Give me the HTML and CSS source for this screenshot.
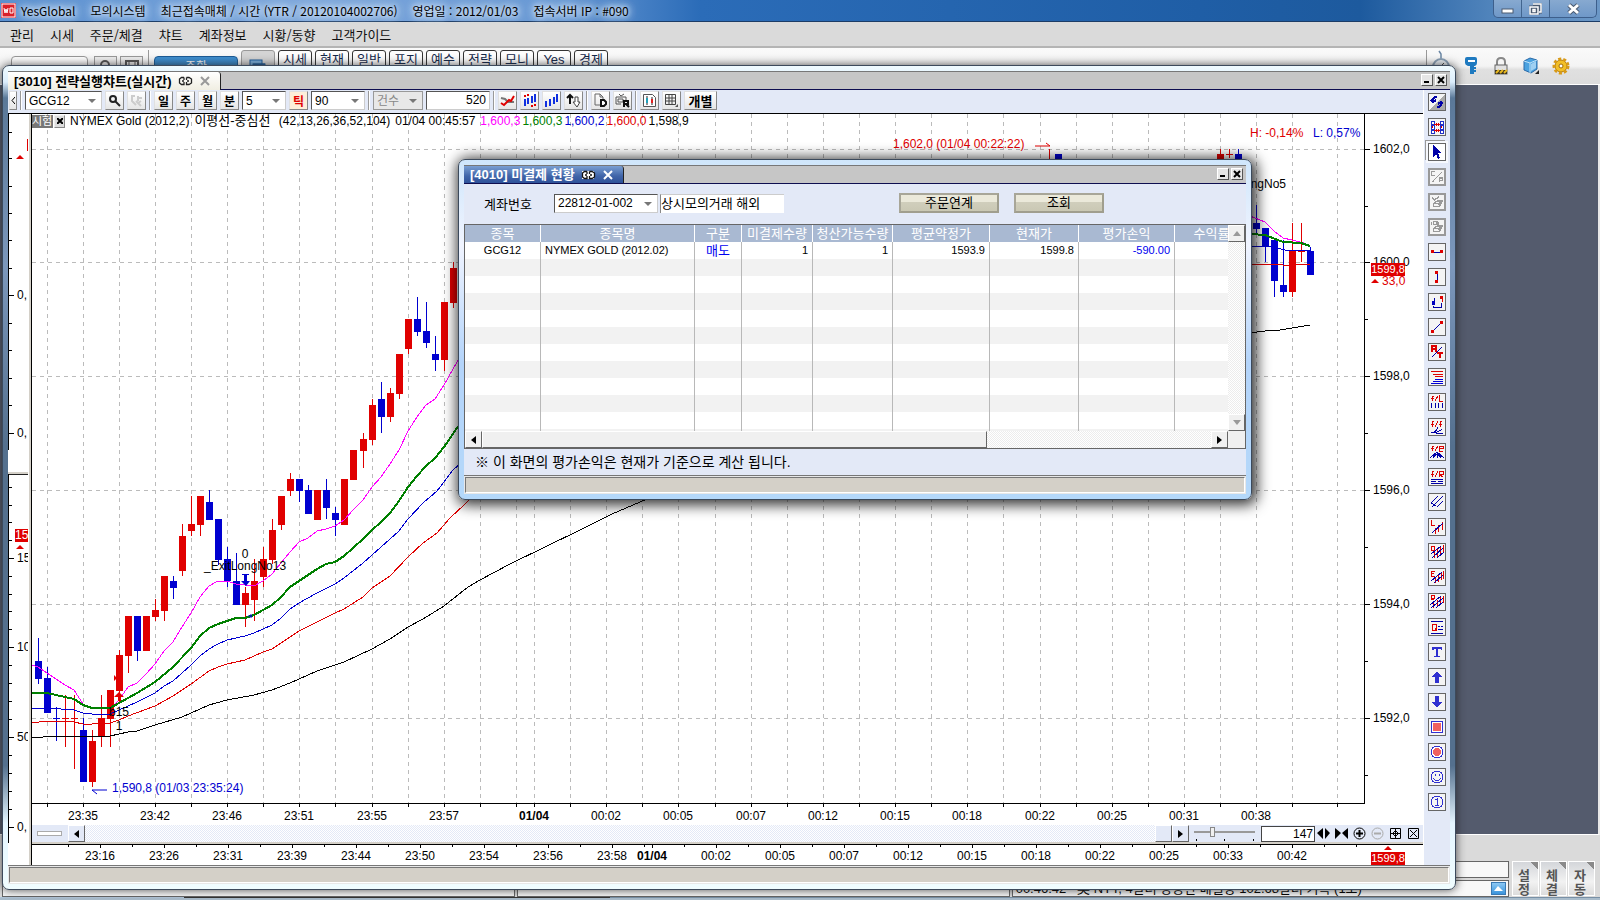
FILE: index.html
```
<!DOCTYPE html>
<html lang="ko">
<head>
    <meta charset="UTF-8">
    <meta name="viewport" content="width=device-width, initial-scale=1.0">
    <title>YesGlobal 모의시스템</title>
    <link rel="stylesheet" href="styles.css">
</head>
<body>
    <div class="app">
        <header class="titlebar">
            <svg class="logo" width="15" height="15" viewBox="0 0 15 15"><rect width="15" height="15" fill="#d9202a"/><rect x="1" y="1" width="13" height="13" fill="none" stroke="#fff"/><path d="M3 5l1 5 1-4 1 4 1-5M9 5h3v5H9z" fill="none" stroke="#fff"/></svg>
            <div class="title-text">
                <span>YesGlobal</span>
                <span>모의시스템</span>
                <span>최근접속매체 / 시간 (YTR / 20120104002706)</span>
                <span>영업일 : 2012/01/03</span>
                <span>접속서버 IP : #090</span>
            </div>
            <div class="sys-buttons">
                <button aria-label="최소화"><svg width="13" height="12"><rect x="1" y="6" width="11" height="4" fill="#fff" stroke="#4a5a70"/></svg></button>
                <button aria-label="이전 크기로"><svg width="13" height="12"><path d="M4 1h8v8h-2M1 4h8v7H1zM4 6.500h2v2H4z" fill="none" stroke="#4a5a70" stroke-width="3"/><path d="M4 1h8v8h-2M1 4h8v7H1zM4 6.500h2v2H4z" fill="none" stroke="#fff" stroke-width="1.500"/></svg></button>
                <button aria-label="닫기"><svg width="13" height="12"><path d="M2 2l9 8M11 2l-9 8" stroke="#4a5a70" stroke-width="5"/><path d="M2 2l9 8M11 2l-9 8" stroke="#fff" stroke-width="3"/></svg></button>
            </div>
        </header>

        <nav class="menubar">
            <a href="#">관리</a>
            <a href="#">시세</a>
            <a href="#">주문/체결</a>
            <a href="#">챠트</a>
            <a href="#">계좌정보</a>
            <a href="#">시황/동향</a>
            <a href="#">고객가이드</a>
        </nav>

        <div class="quickbar">
            <input class="quick-input" type="text" aria-label="화면번호">
            <button class="quick-btn" aria-label="검색"><svg width="14" height="14" viewBox="0 0 14 14"><circle cx="6" cy="5" r="4" fill="none" stroke="#555" stroke-width="2"/><path d="M9 8l4 5" stroke="#555" stroke-width="2"/></svg></button>
            <button class="quick-btn" aria-label="저장"><svg width="14" height="14" viewBox="0 0 14 14"><path d="M1 1h12v12H1z" fill="none" stroke="#555" stroke-width="2"/><path d="M4 1v5h6V1" fill="none" stroke="#555"/></svg></button>
            <span class="quick-sep"></span>
            <button class="quick-main">주황</button>
            <div class="quick-tabs">
                <button class="stack" aria-label="화면 목록"><svg width="18" height="16" viewBox="0 0 18 16"><rect x="1" y="1" width="12" height="9" fill="#7ab0de" stroke="#1f5c9a"/><rect x="4" y="5" width="12" height="9" fill="#cfe4f6" stroke="#1f5c9a"/><path d="M4 6h12" stroke="#1f5c9a" stroke-width="3"/></svg></button>
                <button>시세</button>
                <button>현재</button>
                <button>일반</button>
                <button>포지</button>
                <button>예수</button>
                <button>전략</button>
                <button>모니</button>
                <button>Yes</button>
                <button>경제</button>
            </div>
            <div class="quick-icons">
                <svg width="18" height="26" viewBox="0 0 18 26"><path d="M7 1l2 3v5" fill="none" stroke="#6a86a4" stroke-width="1.500"/><circle cx="9" cy="17" r="8" fill="#e8eef4" stroke="#8aa0b6" stroke-width="2"/><path d="M8 17l4-4" stroke="#444"/></svg>
                <svg width="18" height="20" viewBox="0 0 18 20"><path d="M3 3q0-2 2-2h8q2 0 2 2v4q0 2-2 3h-1v8H8v-8H6q-3-1-3-3z" fill="#1f7ac0"/><path d="M6 4h7v2H6z" fill="#fff"/><path d="M12 12h2M12 15h2" stroke="#1f7ac0" stroke-width="2"/></svg>
                <svg width="18" height="20" viewBox="0 0 18 20"><path d="M5 10V6q0-4 4-4t4 4v4" fill="none" stroke="#888" stroke-width="2"/><rect x="3" y="9" width="12" height="9" fill="#e2e2e2" stroke="#666"/><path d="M3 14h12v4H3z" fill="#3a3420"/><path d="M4 17l3-3M8 17l3-3M12 17l3-3" stroke="#e8b820" stroke-width="2"/></svg>
                <svg width="18" height="20" viewBox="0 0 18 20"><path d="M2 5l6-3 7 2v9l-6 4-7-3z" fill="#4aa2e0" stroke="#2a6aa8"/><path d="M2 5l6 2 7-3M8 7v10" fill="none" stroke="#bfe2f8"/><path d="M9 8l5-3v7l-5 3z" fill="#9fd0f2"/><path d="M17 14v4h-4z" fill="#222"/></svg>
                <svg width="18" height="20" viewBox="0 0 18 20"><circle cx="9" cy="10" r="6" fill="#f2bf26" stroke="#b07a10"/><circle cx="9" cy="10" r="7" fill="none" stroke="#d89a18" stroke-width="3" stroke-dasharray="3 2"/><circle cx="9" cy="10" r="2" fill="#fff" stroke="#a06a08"/></svg>
            </div>
        </div>

        <main class="desktop"></main>

        <footer class="bottombar">
            <div class="feeds">
                <div class="feed-row"><div></div><div></div><div></div></div>
                <div class="feed-row"><div></div><div></div><div class="news">00:46:42&nbsp;&nbsp; 美 NYT, 4달러 상승한 배럴당 102.68달러 기록 (1보)<button class="news-up" aria-label="펼치기"><svg width="9" height="5"><path d="M0 5l4-5 5 5z" fill="#fff"/></svg></button></div></div>
            </div>
            <div class="side-buttons">
                <button>설<br>정</button>
                <button>체<br>결</button>
                <button>자<br>동</button>
            </div>
        </footer>
        <div class="taskbar"></div>

        <!-- 3010 chart window -->
        <section class="window chart-window">
            <div class="tabbar">
                <div class="tab">
                    <b>[3010] 전략실행챠트(실시간)</b>
                    <svg width="15" height="10" viewBox="0 0 15 10"><path d="M6 1.500H3.500L1.500 3v4l2 1.500H6V6M6 1.500V4M4 5h2M8.500 1.500H11L13.500 3v4L11 8.500H8.500V6M8.500 1.500V4M9 5h2" fill="none" stroke="#222" stroke-width="1.300"/></svg>
                    <button class="tab-close" aria-label="탭 닫기"><svg width="10" height="10"><path d="M1 1l8 8M9 1l-8 8" stroke="#999" stroke-width="2"/></svg></button>
                </div>
                <div class="win-buttons">
                    <button aria-label="최소화"><svg width="8" height="8"><path d="M1 6h5" stroke="#000" stroke-width="2"/></svg></button>
                    <button aria-label="닫기"><svg width="8" height="8"><path d="M1 1l6 6M7 1l-6 6" stroke="#000" stroke-width="2"/></svg></button>
                </div>
            </div>

            <div class="work">
                <div class="work-left">
                    <div class="toolbar">
                        <button class="tb slim" aria-label="접기"><svg width="4" height="7"><path d="M4 0L1 3.500 4 7" fill="none" stroke="#000"/></svg></button>
                        <span class="sep"></span>
                        <span class="select w77"><select aria-label="종목"><option>GCG12</option></select></span>
                        <button class="tb" aria-label="종목 검색"><svg width="13" height="13"><circle cx="5" cy="5" r="3" fill="none" stroke="#222" stroke-width="2"/><path d="M7 7l5 5" stroke="#222" stroke-width="2"/></svg></button>
                        <button class="tb" aria-label="검색 취소" disabled><svg width="13" height="13"><path d="M5 2H2v5l4 4M6 7l5 5M8 2v5M8 4h4M11 7l-3 2" fill="none" stroke="#ccc" stroke-width="2"/></svg></button>
                        <span class="sep"></span>
                        <button class="tb">일</button>
                        <button class="tb">주</button>
                        <button class="tb">월</button>
                        <button class="tb">분</button>
                        <span class="select w44"><select aria-label="분 단위"><option>5</option></select></span>
                        <button class="tb red">틱</button>
                        <span class="select w54"><select aria-label="틱 단위"><option>90</option></select></span>
                        <span class="sep"></span>
                        <span class="select w50"><select aria-label="조회 기준" disabled><option>건수</option></select></span>
                        <input class="count" type="text" value="520" aria-label="조회 건수">
                        <span class="sep"></span>
                        <button class="tb" aria-label="라인"><svg width="15" height="15"><path d="M1 5l4 1 3 3h6" fill="none" stroke="#777" stroke-width="2"/><path d="M1 10l3 2 5-5 2 1 3-5" fill="none" stroke="#e00000" stroke-width="2"/></svg></button>
                        <button class="tb" aria-label="봉 비교"><svg width="15" height="15"><path d="M3 6v7M6 5v6M10 3v7M13 1v8" stroke="#1030e0" stroke-width="2"/><path d="M2 3h2M5 2h2M9 13h2M12 12h2" stroke="#e00000" stroke-width="2"/></svg></button>
                        <button class="tb" aria-label="봉"><svg width="15" height="15"><path d="M2 8v6M6 6v7M10 4v7M13 1v8" stroke="#1030e0" stroke-width="2"/></svg></button>
                        <button class="tb" aria-label="상하 반전"><svg width="15" height="15"><path d="M4 2v9M1 5l3-3 3 3" fill="none" stroke="#111" stroke-width="2"/><path d="M9 4h3v5h2l-3 5-4-5h2z" fill="#fff" stroke="#444"/></svg></button>
                        <span class="sep"></span>
                        <button class="tb" aria-label="데이터"><svg width="15" height="15"><path d="M7 12H2V1h5l3 3v2M7 1v3h3" fill="none" stroke="#666"/><path d="M8 7h3l2 2v2l-2 2H8z" fill="#fff" stroke="#111" stroke-width="2"/></svg></button>
                        <button class="tb" aria-label="리플레이"><svg width="15" height="15"><path d="M4 1l2 2 3-2M1 4h10v3M1 4v7h5M3 6h5v3H3z" fill="none" stroke="#555"/><path d="M9 14V8h4v3H9M11 11l3 3" fill="none" stroke="#111" stroke-width="2"/></svg></button>
                        <span class="sep"></span>
                        <button class="tb" aria-label="차트 유형"><svg width="15" height="15"><path d="M1.500 1.500h9l3 3v9h-12z" fill="#fff" stroke="#555"/><path d="M5 3v9M10 4v8" stroke="#222"/><path d="M4 5h2v5H4z" fill="#20a0b8"/><path d="M9 6h2v4H9z" fill="#e02020"/></svg></button>
                        <button class="tb" aria-label="표"><svg width="15" height="15"><path d="M1.500 1.500h10v10h-10zM1 5h10M1 8h10M5 2v10M8 2v10" fill="none" stroke="#444"/><path d="M14 11v3h-3z" fill="#555"/></svg></button>
                        <button class="tb wide">개별</button>
                    </div>

                    <div class="panes">
                        <div class="side-pane">
                            <svg class="side-svg" id="sideAxis"></svg>
                        </div>
                        <div class="chart-pane">
                            <div class="chart-body">
                                <svg class="chart-svg" id="chart"></svg>
                                <div class="chart-info">
                                    <span class="mock">시험</span><button class="mock-x" aria-label="지표 삭제"><svg width="6" height="6"><path d="M0 0l6 6M6 0l-6 6" stroke="#000" stroke-width="2"/></svg></button>
                                    <span>NYMEX Gold (2012,2)</span>
                                    <span class="indicator">이평선-중심선</span>
                                    <span>&nbsp;(42,13,26,36,52,104)</span>
                                    <span>01/04 00:45:57</span>
                                    <div class="values">
                                        <span class="magenta">1,600,3</span>
                                        <span class="green">1,600,3</span>
                                        <span class="blue">1,600,2</span>
                                        <span class="crimson">1,600,0</span>
                                        <span>1,598,9</span>
                                    </div>
                                </div>
                            </div>
                            <div class="scrollstrip">
                                <span class="grip"></span>
                                <button class="sb" aria-label="왼쪽"><svg width="5" height="8"><path d="M5 0v8L0 4z"/></svg></button>
                                <span class="track"></span>
                                <span class="sb"></span>
                                <button class="sb" aria-label="오른쪽"><svg width="5" height="8"><path d="M0 0v8l5-4z"/></svg></button>
                                <input class="zoom-range" type="range" min="0" max="100" value="28" aria-label="확대">
                                <input class="bars" type="text" value="147" aria-label="봉 개수">
                                <div class="strip-icons">
                                    <svg width="13" height="13"><path d="M6 1v11L0 6zM8 1v11l5-6z"/></svg>
                                    <svg width="13" height="13"><path d="M0 1v11l6-6zM13 1v11L7 6z"/></svg>
                                    <svg width="13" height="13"><circle cx="6.500" cy="6.500" r="5.500" fill="none" stroke="#000"/><path d="M3 6.500h7M6.500 3v7" stroke="#000" stroke-width="2"/></svg>
                                    <svg width="13" height="13"><circle cx="6.500" cy="6.500" r="5.500" fill="none" stroke="#aaa"/><path d="M3 6.500h7" stroke="#aaa" stroke-width="2"/></svg>
                                    <svg width="13" height="13"><path d="M1.500 1.500h10v10h-10zM2 6.500h9M6.500 2v9M4.500 5v3M8.500 5v3M5 4.500h3M5 8.500h3" fill="none" stroke="#000"/></svg>
                                    <svg width="13" height="13"><path d="M1.500 1.500h10v10h-10zM3 3l7 7M10 3l-7 7" fill="none" stroke="#000"/></svg>
                                </div>
                            </div>
                            <svg class="lower-svg" id="lowerAxis"></svg>
                        </div>
                    </div>
                </div>

                <div class="tools">
                    <button aria-label="새로고침"><svg viewBox="0 0 16 16"><path d="M16 0v16H0z" fill="#aaa"/><path d="M8 3H6L4 5v3M2 6l2 2 3-2M8 13h2l2-2V8M9 10l3-2 2 2" fill="none" stroke="#0000a8" stroke-width="2"/></svg></button>
                    <button aria-label="연결"><svg viewBox="0 0 16 16"><path d="M2 2h3v3H2zM2 6h3v4H2zM2 11h3v3H2zM11 2h3v3h-3zM11 6h3v4h-3zM11 11h3v3h-3z" fill="#fff" stroke="#2030c8"/><path d="M5 5h6M5 11h6M7 4v3M9 4v3M7 10v3M9 10v3M3 7v2M12 7v2" stroke="#d00"/></svg></button>
                    <button class="on" aria-label="선택"><svg viewBox="0 0 16 16"><path d="M4 1v12l3-3 2 5 2-1-2-5h4z" fill="#0000a8"/></svg></button>
                    <button aria-label="콜풋" disabled><svg viewBox="0 0 16 16"><path d="M6 2H2v4h4M11 14V9h3v3h-3M3 13L13 3M12 3h2M2 13h2" fill="none" stroke="#999" stroke-width="1.500"/></svg></button>
                    <button aria-label="지우개" disabled><svg viewBox="0 0 16 16"><path d="M2 3l3 3 5-4M4 10l4-3h6l-3 6H4zM4 10h6l4-3M10 10l1 3" fill="none" stroke="#999" stroke-width="1.500"/></svg></button>
                    <button aria-label="전체 지우개" disabled><svg viewBox="0 0 16 16"><path d="M2 2v4M4 2h4v3H4zM10 2v5M4 10l4-3h6l-3 6H4zM4 10h6l4-3M10 10l1 3" fill="none" stroke="#999" stroke-width="1.500"/></svg></button>
                    <button aria-label="수평선"><svg viewBox="0 0 16 16"><path d="M2 8h12" stroke="#0000a8"/><path d="M2 6h3v3H2zM11 6h3v3h-3z" fill="#d00"/></svg></button>
                    <button aria-label="수직선"><svg viewBox="0 0 16 16"><path d="M8 3v10" stroke="#0000a8"/><path d="M6 2h3v3H6zM6 11h3v3H6z" fill="#d00"/></svg></button>
                    <button aria-label="구간"><svg viewBox="0 0 16 16"><path d="M3 7h3v4H3z" fill="#0000c0"/><path d="M5 4v3M4 13h8V9M4 13v-1" fill="none" stroke="#0000a8"/><path d="M11 2h3v3h-3z" fill="#d00"/><path d="M13 5v3" stroke="#d00"/></svg></button>
                    <button aria-label="추세선"><svg viewBox="0 0 16 16"><path d="M3 13L13 3" stroke="#0000a8"/><path d="M2 11h3v3H2zM11 2h3v3h-3z" fill="#d00"/></svg></button>
                    <button aria-label="각도"><svg viewBox="0 0 16 16"><path d="M3 8V2h4v6M3 5h4M8 9h6M11 9v5" fill="none" stroke="#d00" stroke-width="2"/><path d="M3 13L13 3" stroke="#0000a8"/></svg></button>
                    <button aria-label="피보나치"><svg viewBox="0 0 16 16"><path d="M2 2h12M4 5h10M6 7h8" stroke="#d00"/><path d="M6 10h8M4 12h10M2 14h12" stroke="#0000d8"/></svg></button>
                    <button aria-label="피보나치 시간"><svg viewBox="0 0 16 16"><path d="M5 2H3v5M2 4h3M10 1v6h4M6 7l3-5" fill="none" stroke="#d00"/><path d="M2 9v5M6 9v5M9 9v5M13 9v5" stroke="#0000a8"/></svg></button>
                    <button aria-label="피보나치 팬"><svg viewBox="0 0 16 16"><path d="M5 2H3v6M2 5h3M13 2h-2v6M10 5h3M6 8l3-6" fill="none" stroke="#d00"/><path d="M2 14q5 0 7-6M4 14q6-1 9-4M7 14h7" fill="none" stroke="#0000a8"/></svg></button>
                    <button aria-label="피보나치 원"><svg viewBox="0 0 16 16"><path d="M5 2H3v5M2 4h3M6 7l3-5M10 4h4V2h-4v5h4" fill="none" stroke="#d00"/><path d="M1 14l7-6 7 6M4 14q4-7 8 0M8 8v6" fill="none" stroke="#0000a8"/></svg></button>
                    <button aria-label="되돌림"><svg viewBox="0 0 16 16"><path d="M5 2H3v6M2 5h3M6 8l3-6M10 8V2h4v3h-4l4 3" fill="none" stroke="#d00"/><path d="M2 10h12M2 12h5M9 12h5M2 14h12" stroke="#0000a8"/></svg></button>
                    <button aria-label="평행선"><svg viewBox="0 0 16 16"><path d="M2 9l7-7M3 13L14 2M8 13l6-6M2 9l5 3" fill="none" stroke="#0000a8"/></svg></button>
                    <button aria-label="회귀 L"><svg viewBox="0 0 16 16"><path d="M2 1v5h4M6 9v6M9 6v7M13 3v8" fill="none" stroke="#d00"/><path d="M3 14L14 4" stroke="#0000a8"/></svg></button>
                    <button aria-label="회귀 D"><svg viewBox="0 0 16 16"><path d="M2 2h3v4H2zM5 8v6M8 5v8M11 3v8M14 1v8" fill="none" stroke="#d00"/><path d="M2 10l10-8M3 14L14 4M8 14l7-6" stroke="#0000a8"/></svg></button>
                    <button aria-label="회귀 E"><svg viewBox="0 0 16 16"><path d="M6 2H2v5h4M2 4h3M6 9v5M9 6v7M12 3v8M14 2v8" fill="none" stroke="#d00"/><path d="M2 12l11-9M5 14l9-8" stroke="#0000a8"/></svg></button>
                    <button aria-label="회귀 R"><svg viewBox="0 0 16 16"><path d="M2 6V1h3v3H2l3 2M4 8v6M8 6v7M11 3v8M14 2v7" fill="none" stroke="#d00"/><path d="M1 11L12 2M2 14L14 4M7 14l7-6" stroke="#0000a8"/></svg></button>
                    <button aria-label="사분선"><svg viewBox="0 0 16 16"><path d="M2 2h12M9 7h2M12 7h2M9 10h5M2 14h12" stroke="#0000a8"/><path d="M3 5h4v6H3zM6 9l2 3" fill="none" stroke="#d00"/></svg></button>
                    <button aria-label="문자"><svg viewBox="0 0 16 16"><path d="M3 3h10v3h-1l-1-1H9v7h2v1H5v-1h2V5H5L4 6H3z" fill="#3030d0"/></svg></button>
                    <button aria-label="위 화살표"><svg viewBox="0 0 16 16"><path d="M8 2l5 6h-3v6H6V8H3z" fill="#3030d0"/></svg></button>
                    <button aria-label="아래 화살표"><svg viewBox="0 0 16 16"><path d="M8 14l5-6h-3V2H6v6H3z" fill="#3030d0"/></svg></button>
                    <button aria-label="사각형"><svg viewBox="0 0 16 16"><path d="M2.500 2.500h11v11h-11z" fill="#fff" stroke="#3030d0"/><path d="M4 4h8v8H4z" fill="#f06060"/></svg></button>
                    <button aria-label="원"><svg viewBox="0 0 16 16"><circle cx="8" cy="8" r="6" fill="#fff" stroke="#3030d0"/><circle cx="8" cy="8" r="4" fill="#f06060"/></svg></button>
                    <button aria-label="스마일"><svg viewBox="0 0 16 16"><circle cx="8" cy="8" r="6" fill="none" stroke="#3030d0"/><path d="M6 5v2M10 5v2M4 9q4 5 8 0" fill="none" stroke="#3030d0"/></svg></button>
                    <button aria-label="번호"><svg viewBox="0 0 16 16"><circle cx="8" cy="8" r="6" fill="none" stroke="#3030d0"/><path d="M6 6l2-1v6M6 11h4" fill="none" stroke="#3030d0"/></svg></button>
                </div>
            </div>
            <div class="statusbar"><span></span></div>
        </section>

        <!-- 4010 open positions -->
        <section class="window position-window">
            <div class="tabbar">
                <div class="tab active">
                    <b>[4010] 미결제 현황</b>
                    <svg width="15" height="10" viewBox="0 0 15 10"><path d="M1 1h12v8H1z" fill="#fff"/><path d="M6 1.500H3.500L1.500 3v4l2 1.500H6V6M6 1.500V4M4 5h2M8.500 1.500H11L13.500 3v4L11 8.500H8.500V6M8.500 1.500V4M9 5h2" fill="none" stroke="#111" stroke-width="1.300"/></svg>
                    <button class="tab-close" aria-label="탭 닫기"><svg width="10" height="10"><path d="M1 1l8 8M9 1l-8 8" stroke="#fff" stroke-width="2"/></svg></button>
                </div>
                <div class="win-buttons">
                    <button aria-label="최소화"><svg width="8" height="8"><path d="M1 6h5" stroke="#000" stroke-width="2"/></svg></button>
                    <button aria-label="닫기"><svg width="8" height="8"><path d="M1 1l6 6M7 1l-6 6" stroke="#000" stroke-width="2"/></svg></button>
                </div>
            </div>
            <div class="account-form">
                <label for="account">계좌번호</label>
                <span class="select account"><select id="account"><option>22812-01-002</option></select></span>
                <input class="owner" type="text" value="상시모의거래 해외" aria-label="계좌명">
                <button class="cmd wide">주문연계</button>
                <button class="cmd">조회</button>
            </div>
            <div class="grid">
                <div class="grid-main">
                    <div class="grid-view">
                        <table>
                            <colgroup><col class="c76"><col class="c154"><col class="c47"><col class="c71"><col class="c80"><col class="c97"><col class="c89"><col class="c96"><col class="c74"></colgroup>
                            <thead>
                                <tr><th>종목</th><th>종목명</th><th>구분</th><th>미결제수량</th><th>청산가능수량</th><th>평균약정가</th><th>현재가</th><th>평가손익</th><th>수익률</th></tr>
                            </thead>
                            <tbody id="rows">
                                <tr><td class="mid">GCG12</td><td>NYMEX GOLD (2012.02)</td><td class="mid sell">매도</td><td class="num">1</td><td class="num">1</td><td class="num">1593.9</td><td class="num">1599.8</td><td class="num sell">-590.00</td><td></td></tr>
                            </tbody>
                        </table>
                    </div>
                    <div class="vscroll">
                        <button class="sb" aria-label="위"><svg width="8" height="5"><path d="M0 5h8L4 0z" fill="#999"/></svg></button>
                        <span class="track"></span>
                        <button class="sb" aria-label="아래"><svg width="8" height="5"><path d="M0 0h8L4 5z" fill="#999"/></svg></button>
                    </div>
                </div>
                <div class="hscroll">
                    <button class="sb" aria-label="왼쪽"><svg width="5" height="8"><path d="M5 0v8L0 4z"/></svg></button>
                    <span class="sb thumb"></span>
                    <span class="track"></span>
                    <button class="sb" aria-label="오른쪽"><svg width="5" height="8"><path d="M0 0v8l5-4z"/></svg></button>
                    <span class="corner"></span>
                </div>
            </div>
            <p class="note">※ 이 화면의 평가손익은 현재가 기준으로 계산 됩니다.</p>
            <div class="statusbar"><span></span></div>
        </section>
    </div>
    <script src="chart.js"></script>
</body>
</html>
```
FILE: styles.css
```
* {
    margin: 0;
    padding: 0;
    box-sizing: border-box;
}

body {
    font-family: "Liberation Sans", "Noto Sans CJK KR", sans-serif;
    font-size: 12px;
    color: #000;
    overflow: hidden;
}

button, input, select {
    font-family: inherit;
    font-size: 12px;
    color: inherit;
    border: none;
    border-radius: 0;
    background: none;
    outline: none;
}

svg {
    display: block;
    flex: none;
}

.app {
    position: relative;
    display: flex;
    flex-direction: column;
    height: 100vh;
    background: #dadada;
}

/* title bar */
.titlebar {
    display: flex;
    align-items: center;
    height: 22px;
    padding-left: 1px;
    background: linear-gradient(90deg, #5a90d0 0, #7ba6dc 300px, #6798d4 560px, #2b6cb8 700px, #1f5ea6 1200px, #1d5a9e 85%, #4f83bb 93%, #6b97c6);
    border-bottom: 1px solid #1c3c66;
}

.title-text {
    display: flex;
    gap: 15px;
    margin-left: 5px;
    font-family: "Noto Sans CJK KR", sans-serif;
    font-size: 12px;
    line-height: 20px;
    white-space: nowrap;
    text-shadow: 0 0 4px #dce9f8, 0 0 8px #dce9f8, 0 0 10px #dce9f8, 0 0 14px #c4daf4;
}

.sys-buttons {
    display: flex;
    align-self: flex-start;
    height: 18px;
    margin: 0 3px 0 auto;
    border: 1px solid #3d5f8c;
    border-top: none;
    border-radius: 0 0 5px 5px;
    background: linear-gradient(#87a9d0, #6f98c8);
}

.sys-buttons button {
    display: flex;
    align-items: center;
    justify-content: center;
    width: 28px;
    border-right: 1px solid #42658f;
}

.sys-buttons button:last-child {
    width: 46px;
    border: none;
}

/* menu */
.menubar {
    display: flex;
    gap: 16px;
    height: 26px;
    padding-left: 10px;
    font-family: "Noto Sans CJK KR", sans-serif;
    font-size: 13px;
    line-height: 25px;
    border-bottom: 2px solid #b4b4b4;
}

.menubar a {
    color: #111;
    text-decoration: none;
}

/* quick bar */
.quickbar {
    display: flex;
    align-items: flex-start;
    height: 37px;
    padding: 8px 30px 0 11px;
    background: linear-gradient(#fafafa, #f4f4f4 50%, #e0e0e0 60%, #dcdcdc);
    border-bottom: 1px solid #fff;
}

.quick-input {
    width: 77px;
    height: 24px;
    margin-right: 6px;
    background: #fff;
    border: 1px solid #999;
    border-radius: 4px;
}

.quick-btn {
    display: flex;
    align-items: center;
    justify-content: center;
    width: 23px;
    height: 22px;
    margin-right: 3px;
    background: #eee;
    border: 1px solid #999;
}

.quick-sep {
    width: 1px;
    height: 28px;
    margin: -6px 5px 0 2px;
    background: #999;
}

.quick-main {
    width: 84px;
    height: 26px;
    padding-bottom: 8px;
    color: #fff;
    background: linear-gradient(#3f8fd0, #2a76b8);
    border: 1px solid #1d5c96;
    border-radius: 4px;
}

.quick-tabs {
    display: flex;
    gap: 3px;
    margin: -6px 0 0 3px;
}

.quick-tabs button {
    width: 34px;
    height: 34px;
    padding-bottom: 15px;
    font-size: 13px;
    color: #14284a;
    background: #fdfdfd;
    border: 1px solid #333;
    border-radius: 3px 3px 0 0;
    line-height: 16px;
}

.quick-tabs .stack {
    display: flex;
    justify-content: center;
    padding-top: 8px;
    background: #d4d4d4;
    border-color: #999;
}

.quick-icons {
    display: flex;
    gap: 12px;
    margin: -6px 0 0 auto;
    padding-left: 5px;
    border-left: 1px solid #999;
}

.quick-icons svg + svg {
    margin-top: 6px;
}

.desktop {
    flex: 1;
    background: #545b6d;
    border-right: 2px solid #e8e8e8;
    border-bottom: 1px solid #fff;
}

/* bottom */
.bottombar {
    display: flex;
    height: 62px;
    padding: 26px 5px 0 2px;
}

.feeds {
    flex: 1;
    margin-right: 3px;
}

.feed-row {
    display: flex;
    gap: 2px;
    height: 17px;
    margin-bottom: 2px;
}

.feed-row div {
    flex: 1 1 0;
    min-width: 0;
    background: #f8f8f8;
    border: 1px solid #666;
}

.feed-row div:first-child {
    flex-basis: 23px;
}

.feed-row .news {
    display: flex;
    justify-content: space-between;
    padding: 0 2px 0 3px;
    font-size: 13px;
    line-height: 15px;
    white-space: nowrap;
}

.news-up {
    display: flex;
    align-items: center;
    justify-content: center;
    width: 15px;
    height: 13px;
    margin-top: 1px;
    background: linear-gradient(#8cc8f4, #3a94dc);
    border: 1px solid #3a7ab4;
}

.side-buttons {
    display: flex;
    gap: 1px;
}

.side-buttons button {
    width: 27px;
    height: 35px;
    font-size: 13px;
    font-weight: bold;
    line-height: 14px;
    color: #555;
    padding: 7px 3px 0 0;
    background: linear-gradient(225deg, #8a8a8a 0, #8a8a8a 5px, transparent 5px), linear-gradient(#d4d6da, #f2f2f2 60%, #dcdcdc);
    border: 1px solid #fff;
}

.taskbar {
    height: 3px;
    background: linear-gradient(90deg, #b0c4d8 0, #b0c4d8 184px, #333 184px, #333 610px, #7890a6 610px);
    border-bottom: 2px solid #a9bccb;
}

/* windows */
.window {
    position: absolute;
    display: flex;
    flex-direction: column;
    padding: 5px;
    border: 1px solid #3c4a5c;
    border-radius: 7px;
}

.chart-window {
    left: 2px;
    top: 65px;
    right: 144px;
    bottom: 10px;
    background: linear-gradient(#f0fbff 0, #dceefc 16px, #5a7898 32px, #7c98bc 200px, #54708e 380px, #54708e 85%, #e4f6ff 92%, #f0fdff);
    box-shadow: 0 0 10px #222c;
}

.position-window {
    left: 458px;
    top: 159px;
    width: 794px;
    background: linear-gradient(#cfe6fb, #f0f4ff 25%, #b4d4fa 60%, #b4d8fa);
    box-shadow: 2px 2px 14px 3px #000c;
}

.tabbar {
    display: flex;
    justify-content: space-between;
    height: 19px;
    flex: none;
    background: #c6c6c6;
    border-top: 1px solid #777;
    border-bottom: 1px solid #0e0e50;
}

.tab {
    display: flex;
    align-items: center;
    height: 18px;
    padding: 0 10px 0 6px;
    background: linear-gradient(#fff, #f0eee2);
    border-right: 1px solid #222;
    border-radius: 0 3px 0 0;
}

.tab b {
    font-size: 13px;
    line-height: 17px;
    margin-right: 6px;
    white-space: nowrap;
}

.tab.active {
    height: 17px;
    color: #fff;
    background: linear-gradient(#7a9fd2, #3f64a8 60%, #2e529a);
}

.tab-close {
    margin-left: 7px;
}

.win-buttons {
    display: flex;
    gap: 2px;
    padding: 2px 3px 0 0;
}

.win-buttons button {
    display: flex;
    align-items: center;
    justify-content: center;
    width: 12px;
    height: 12px;
    background: #e6e6e6;
    border: 1px solid;
    border-color: #fff #555 #555 #fff;
}

.statusbar {
    height: 19px;
    flex: none;
    padding: 1px;
    background: #e8e8e8;
    border-top: 1px solid #777;
}

.statusbar span {
    display: block;
    height: 16px;
    background: #d4d0c8;
    border: 1px solid;
    border-color: #777 #fff #fff #777;
}

.work {
    flex: 1;
    display: flex;
    min-height: 0;
    background: #e3e9f7;
}

.work-left {
    flex: 1;
    min-width: 0;
    display: flex;
    flex-direction: column;
}

/* chart toolbar */
.toolbar {
    display: flex;
    gap: 3px;
    height: 24px;
    padding: 1px 0 0 1px;
    border-bottom: 1px solid #000;
}

.tb {
    display: flex;
    align-items: center;
    justify-content: center;
    width: 19px;
    height: 19px;
    font-weight: bold;
    background: linear-gradient(#fff, #e6e6e6);
    border: 1px solid;
    border-color: #e0e0e0 #888 #888 #e0e0e0;
    flex: none;
}

.tb.slim {
    width: 8px;
}

.tb.wide {
    width: 33px;
    font-size: 13px;
}

.tb.red {
    color: #e00000;
    background: #fdeeda;
}

.sep {
    width: 2px;
    height: 19px;
    background: #999;
    border-right: 1px solid #fff;
}

.select {
    position: relative;
    display: block;
    height: 19px;
    flex: none;
}

.select::after {
    content: "";
    position: absolute;
    right: 6px;
    top: 8px;
    border: 4px solid transparent;
    border-top-color: #777;
    border-bottom: none;
    pointer-events: none;
}

.select select {
    appearance: none;
    width: 100%;
    height: 19px;
    padding-left: 3px;
    background: #fff;
    border: 1px solid;
    border-color: #555 #ccc #ccc #555;
}

.select select:disabled {
    color: #888;
    background: #e8e8e8;
    border-color: #999;
    opacity: 1;
}

.w77 {
    width: 77px;
}

.w44 {
    width: 44px;
}

.w54 {
    width: 54px;
}

.w50 {
    width: 50px;
}

.count {
    width: 64px;
    height: 19px;
    padding: 0 3px 2px 0;
    text-align: right;
    background: #fff;
    border: 1px solid;
    border-color: #555 #ccc #ccc #555;
}

.panes {
    flex: 1;
    display: flex;
    min-height: 0;
    background: #fff;
}

.side-pane {
    width: 23px;
    border-right: 2px solid #d4d0c8;
}

.side-svg {
    width: 20px;
    height: 100%;
}

.chart-pane {
    flex: 1;
    min-width: 0;
    display: flex;
    flex-direction: column;
    border-left: 1px solid #000;
}

.chart-body {
    flex: 1;
    min-height: 0;
    position: relative;
}

.chart-svg {
    width: 100%;
    height: 100%;
}

.chart-svg text, .lower-svg text, .side-svg text {
    font-size: 12px;
}

.chart-svg .price, .lower-svg .price {
    font-size: 11px;
}

.chart-info {
    position: absolute;
    left: 0;
    top: 0;
    display: flex;
    align-items: center;
    gap: 5px;
    line-height: 14px;
    white-space: nowrap;
}

.indicator {
    font-size: 13px;
}

.values {
    display: flex;
    gap: 2px;
}

.mock {
    width: 21px;
    height: 13px;
    margin-right: -4px;
    font-size: 11px;
    line-height: 13px;
    color: #fff;
    background: #777;
}

.mock-x {
    display: flex;
    align-items: center;
    justify-content: center;
    width: 11px;
    height: 13px;
    background: #ddd;
    border: 1px solid;
    border-color: #eee #888 #888 #eee;
}

.magenta { color: #ff00ff; }
.green { color: #008000; }
.blue { color: #0000d0; }
.crimson { color: #e00000; }

/* scroll strips */
.scrollstrip {
    display: flex;
    align-items: center;
    height: 19px;
    padding-right: 3px;
    background: #e3e9f7;
    border-bottom: 2px solid #d4d0c8;
}

.grip {
    width: 25px;
    height: 5px;
    margin: 0 6px 0 5px;
    border: 1px solid #aaa;
    background: #fff;
}

.sb {
    display: flex;
    align-items: center;
    justify-content: center;
    width: 17px;
    height: 17px;
    flex: none;
    background: #f0f0f0;
    border: 1px solid;
    border-color: #fff #666 #666 #fff;
}

.scrollstrip .sb {
    background: #e3e9f7;
}

.track {
    flex: 1;
    align-self: stretch;
    background: repeating-conic-gradient(#fff 0 25%, #ececec 0 50%) 0 0 / 2px 2px;
}

.scrollstrip .track {
    background: repeating-conic-gradient(#fff 0 25%, #e3e9f7 0 50%) 0 0 / 2px 2px;
}

.zoom-range {
    appearance: none;
    width: 61px;
    height: 15px;
    margin: 0 6px 0 5px;
    background: linear-gradient(#999, #999) 0 5px / 100% 2px no-repeat, linear-gradient(#000, #000) 2px 13px / 1px 3px no-repeat, linear-gradient(#000, #000) 30px 13px / 1px 3px no-repeat, linear-gradient(#000, #000) 59px 13px / 1px 3px no-repeat;
}

.zoom-range::-webkit-slider-thumb {
    appearance: none;
    width: 5px;
    height: 10px;
    margin-top: -3px;
    background: #f0f0f0;
    border: 1px solid #888;
}

.bars {
    width: 54px;
    height: 16px;
    padding-right: 1px;
    text-align: right;
    background: #fff;
    border: 1px solid #444;
}

.strip-icons {
    display: flex;
    gap: 5px;
    margin-left: 2px;
}

.lower-svg {
    width: 100%;
    height: 21px;
}

/* drawing tools */
.tools {
    display: flex;
    flex-direction: column;
    gap: 7px;
    width: 27px;
    padding: 3px 0 0 4px;
    border-left: 1px solid #fff;
}

.tools button {
    width: 18px;
    height: 18px;
    flex: none;
    background: #f4f4f4;
    border: 1px solid #666;
}

.tools svg {
    width: 16px;
    height: 16px;
    shape-rendering: crispEdges;
}

.tools button:disabled {
    border: 2px solid #999;
    padding: 0;
}

.tools button:disabled svg {
    width: 14px;
    height: 14px;
}

.tools .on {
    background: #fff;
    outline: 2px solid #f6f8fd;
    box-shadow: -2px -2px 0 1px #999;
}

/* positions window */
.account-form {
    display: flex;
    align-items: center;
    height: 40px;
    padding: 0 0 2px 20px;
    background: #e3e9f7;
}

.account-form label {
    width: 70px;
    font-size: 13px;
}

.account {
    width: 104px;
    margin-right: 2px;
}

.owner {
    width: 124px;
    height: 19px;
    padding: 0 0 2px 0;
    font-size: 13px;
    background: #fff;
    border-left: 1px solid #888;
    border-top: 1px solid #ccc;
}

.cmd {
    width: 90px;
    height: 20px;
    margin-left: 15px;
    font-size: 13px;
    line-height: 16px;
    background: linear-gradient(#ebe9da 45%, #d0cebc 46%, #cac8b4);
    border: 2px solid;
    border-color: #a8a698 #a09e8e #a09e8e #a8a698;
}

.cmd.wide {
    width: 100px;
    margin-left: 115px;
}

.grid {
    height: 225px;
    background: #fff;
    border: 1px solid #666;
    border-bottom-width: 1px;
}

.grid-main {
    display: flex;
    height: 206px;
}

.grid-view {
    flex: 1;
    min-width: 0;
    overflow: hidden;
}

.grid table {
    width: 784px;
    table-layout: fixed;
    border-collapse: separate;
    border-spacing: 0;
}

.c76 { width: 76px; }
.c154 { width: 154px; }
.c47 { width: 47px; }
.c71 { width: 71px; }
.c80 { width: 80px; }
.c97 { width: 97px; }
.c89 { width: 89px; }
.c96 { width: 96px; }
.c74 { width: 74px; }

.grid th {
    height: 17px;
    font-size: 13px;
    font-weight: normal;
    line-height: 17px;
    color: #fff;
    background: #a9b9d2;
    border-right: 1px solid #fff;
    white-space: nowrap;
}

.grid td {
    height: 17px;
    padding: 0 4px;
    line-height: 17px;
    font-size: 11px;
    border-right: 1px solid #b8b8b8;
    white-space: nowrap;
}

.grid tr:nth-child(even) td {
    background: #f2f2f2;
}

.grid .mid {
    text-align: center;
}

.grid .num {
    text-align: right;
}

.grid .sell {
    color: #0000f0;
}

.grid .mid.sell {
    font-size: 13px;
}

.vscroll {
    display: flex;
    flex-direction: column;
    width: 17px;
}

.hscroll {
    display: flex;
    height: 17px;
}

.hscroll .thumb {
    width: 505px;
}

.corner {
    width: 17px;
    background: #f0f0f0;
}

.note {
    height: 26px;
    padding-left: 11px;
    font-size: 14px;
    line-height: 26px;
    background: #e3e9f7;
}
```
FILE: chart.js
```
const NS = 'http://www.w3.org/2000/svg';
const RED = '#e00000';
const BLUE = '#0000d0';

function add(parent, tag, attrs, text) {
    const el = document.createElementNS(NS, tag);
    for (const key in attrs) el.setAttribute(key, attrs[key]);
    if (text !== undefined) el.textContent = text;
    parent.appendChild(el);
    return el;
}

function layer(id, dx, dy) {
    return add(document.getElementById(id), 'g', { transform: `translate(${dx},${dy})` });
}

function rect(g, x, y, w, h, fill) {
    add(g, 'rect', { x: x, y: y, width: w, height: h, fill: fill });
}

function label(g, x, y, text, fill, anchor, weight) {
    return add(g, 'text', { x: x, y: y + 4, fill: fill || '#000', 'text-anchor': anchor || 'start', 'font-weight': weight || 'normal' }, text);
}

// ---- main chart ----
const g = layer('chart', -32, -114);

const gridX = [47, 83, 119, 155, 191, 227, 263, 299, 335, 372, 408, 444, 480, 516, 534, 570, 606, 642, 678, 715, 751, 787, 823, 859, 895, 931, 967, 1003, 1040, 1076, 1112, 1148, 1184, 1220, 1256, 1292, 1337];
const gridY = [149, 262, 376, 490, 604, 718];

gridX.forEach(x => {
    add(g, 'path', { d: `M${x + 0.5} 114V803`, stroke: '#bbb', 'stroke-dasharray': '4 4' });
    rect(g, x, 803, 1, 4, '#000');
});
gridY.forEach((y, i) => {
    add(g, 'path', { d: `M32 ${y + 0.5}H1364`, stroke: '#bbb', 'stroke-dasharray': '4 4' });
    rect(g, 1364, y, 6, 1, '#000');
    rect(g, 1364, y + 57, 4, 1, '#000');
    label(g, 1373, y, (1602 - i * 2) + ',0');
});
rect(g, 32, 803, 1333, 1, '#000');
rect(g, 1364, 114, 1, 690, '#000');

const times = [[83, '23:35'], [155, '23:42'], [227, '23:46'], [299, '23:51'], [372, '23:55'], [444, '23:57'], [534, '01/04'], [606, '00:02'], [678, '00:05'], [751, '00:07'], [823, '00:12'], [895, '00:15'], [967, '00:18'], [1040, '00:22'], [1112, '00:25'], [1184, '00:31'], [1256, '00:38']];
times.forEach(t => label(g, t[0], 816, t[1], '#000', 'middle', t[1] === '01/04' ? 'bold' : 'normal'));

// color, high, body top, body bottom, low
const candles = [
    ['b', 638, 661, 679, 684], ['b', 667, 678, 713, 713], ['b', 707, 718, 719, 741], ['r', 695, 718, 719, 747],
    ['r', 695, 718, 719, 769], ['b', 718, 730, 782, 782], ['r', 730, 741, 782, 787], ['r', 695, 718, 736, 747],
    ['r', 690, 690, 719, 747], ['r', 650, 655, 691, 704], ['r', 616, 616, 656, 673], ['b', 616, 616, 651, 661],
    ['r', 616, 616, 651, 651], ['r', 599, 610, 617, 621], ['r', 576, 576, 611, 621], ['b', 576, 581, 588, 599],
    ['r', 524, 536, 571, 576], ['r', 496, 524, 531, 536], ['r', 496, 496, 525, 536], ['b', 490, 502, 520, 520],
    ['b', 519, 519, 560, 565], ['b', 547, 559, 581, 587], ['b', 553, 581, 605, 605], ['r', 587, 593, 605, 627],
    ['r', 559, 581, 600, 621], ['r', 547, 559, 577, 587], ['r', 519, 530, 560, 564], ['r', 496, 496, 525, 530],
    ['r', 473, 479, 491, 496], ['b', 479, 479, 491, 502], ['b', 485, 490, 514, 514], ['r', 490, 490, 520, 520],
    ['b', 479, 490, 508, 519], ['b', 507, 513, 520, 536], ['r', 479, 479, 525, 525], ['r', 450, 450, 480, 480],
    ['r', 433, 439, 451, 468], ['r', 399, 405, 440, 445], ['b', 382, 399, 417, 433], ['r', 388, 393, 417, 422],
    ['r', 354, 354, 394, 399], ['r', 319, 319, 349, 354], ['b', 297, 319, 332, 336], ['b', 302, 331, 343, 348],
    ['b', 336, 354, 360, 371], ['r', 302, 302, 360, 371], ['r', 262, 268, 303, 308]
];
const lateCandles = [
    [1049, 'r', 149, 161, 162, 165], [1058, 'b', 154, 154, 170, 172],
    [1220, 'r', 149, 154, 170, 172], [1229, 'r', 149, 154, 155, 158], [1238, 'b', 149, 154, 170, 172],
    [1256, 'b', 205, 223, 229, 235], [1265, 'b', 228, 228, 247, 262], [1274, 'b', 240, 240, 281, 297],
    [1283, 'b', 240, 285, 292, 297], [1292, 'r', 223, 251, 292, 297], [1301, 'r', 223, 251, 252, 262],
    [1310, 'b', 247, 251, 275, 275]
];

function candle(x, c) {
    const color = c[0] === 'r' ? RED : BLUE;
    rect(g, x, c[1], 1, c[4] - c[1], color);
    rect(g, x - 3, c[2], 7, c[3] - c[2], color);
}
candles.forEach((c, i) => candle(38 + i * 9 + (i > 35 ? 1 : 0), c));
lateCandles.forEach(c => candle(c[0], c.slice(1)));

function line(points, color, width) {
    add(g, 'polyline', { points: points, fill: 'none', stroke: color, 'stroke-width': width || 1, 'shape-rendering': 'crispEdges' });
}
line('32,665 38,667 47,673 65,685 74,690 83,704 92,708 101,709 113,707 119,700 128,687 137,683 146,674 155,664 164,651 173,642 182,627 191,613 200,597 209,586 218,581 227,581 236,584 245,585 254,586 263,581 272,574 281,563 290,552 299,542 308,538 317,531 326,529 335,526 344,520 353,510 363,500 372,487 381,477 390,464 399,450 408,431 417,417 426,405 435,399 444,385 457,362 470,340', '#ff00ff');
line('32,708 47,708 74,710 83,713 101,715 110,714 119,710 137,702 155,693 164,686 173,681 191,665 200,656 209,649 218,644 227,640 245,636 254,633 263,629 272,625 281,618 290,609 299,603 317,593 335,584 344,578 363,563 381,547 399,531 408,519 423,503 437,491 453,470 470,455', BLUE);
line('32,723 47,721 74,722 83,724 92,724 110,723 119,720 128,716 155,706 173,696 191,684 209,671 218,667 227,664 245,660 263,652 272,649 299,631 327,617 335,613 344,609 363,597 372,588 390,576 408,557 423,543 437,533 450,518 480,490', RED);
line('32,738 43,737 65,736 110,736 128,732 137,731 155,725 182,717 200,709 209,705 227,700 254,695 272,690 290,683 317,671 344,662 372,649 390,639 408,627 423,619 444,606 468,587 480,580 510,564 545,547 580,530 612,514 647,499 690,485', '#000');
line('32,693 47,693 65,697 74,699 83,705 92,708 110,708 119,703 128,698 137,693 155,682 173,667 191,648 200,636 209,628 218,624 227,621 236,618 245,618 254,615 263,610 272,605 281,597 290,587 299,581 317,569 326,564 335,562 344,556 363,539 372,530 381,522 390,513 399,501 408,487 417,476 426,466 435,458 444,447 457,428 470,412', '#008000', 2);
line('1250,216 1265,222 1274,231 1283,238 1292,240 1304,243', '#ff00ff');
line('1250,246 1274,247 1285,250 1310,251', BLUE);
line('1250,265 1265,264 1276,264 1290,266 1300,264 1310,265', RED);
line('1250,333 1265,331 1280,330 1310,325', '#000');
line('1250,234 1265,235 1283,242 1301,243 1310,246', '#008000', 2);

// trade signals
add(g, 'path', { d: 'M242 574h7v1h-2v6h3l-4 5-5-5h3v-6h-2z', fill: BLUE });
add(g, 'path', { d: 'M119 692l5 5h-3v4h-3v-4h-4zM114 675l3 3-3 3z', fill: RED });
add(g, 'path', { d: 'M248 616h4M251 614v4', stroke: BLUE });
label(g, 245, 554, '0', '#000', 'middle');
label(g, 204, 566, '_ExitLongNo13');
label(g, 109, 712, 'b15');
label(g, 119, 726, '1', '#000', 'middle');
label(g, 1244, 184, 'ongNo5');

// high / low marks
label(g, 893, 144, '1,602,0 (01/04 00:22:22)', RED);
add(g, 'path', { d: 'M1035 146h15l-4-3', fill: 'none', stroke: RED });
label(g, 112, 788, '1,590,8 (01/03 23:35:24)', BLUE);
add(g, 'path', { d: 'M107 790H92l5 4', fill: 'none', stroke: BLUE });
label(g, 1250, 133, 'H: -0,14%', RED);
label(g, 1313, 133, 'L: 0,57%', BLUE);

// last price
rect(g, 1371, 263, 34, 13, RED);
label(g, 1388, 269, '1599,8', '#fff', 'middle').setAttribute('class', 'price');
add(g, 'path', { d: 'M1371 283l4-4 4 4z', fill: RED });
label(g, 1382, 281, '33,0', RED);

// ---- lower time axis ----
const low = layer('lowerAxis', -32, -844);
const lowTimes = [[100, '23:16'], [164, '23:26'], [228, '23:31'], [292, '23:39'], [356, '23:44'], [420, '23:50'], [484, '23:54'], [548, '23:56'], [612, '23:58'], [652, '01/04'], [716, '00:02'], [780, '00:05'], [844, '00:07'], [908, '00:12'], [972, '00:15'], [1036, '00:18'], [1100, '00:22'], [1164, '00:25'], [1228, '00:33'], [1292, '00:42']];
rect(low, 32, 844, 1392, 1, '#000');
lowTimes.forEach(t => {
    rect(low, t[0], 844, 1, 4, '#000');
    rect(low, t[0] + 32, 844, 1, 3, '#000');
    label(low, t[0], 856, t[1], '#000', 'middle', t[1] === '01/04' ? 'bold' : 'normal');
});
rect(low, 68, 844, 1, 3, '#000');
rect(low, 1356, 844, 1, 3, '#000');
rect(low, 1371, 852, 34, 13, RED);
label(low, 1388, 858, '1599,8', '#fff', 'middle').setAttribute('class', 'price');
add(low, 'path', { d: 'M1384 850l4-4 4 4z', fill: RED });

// ---- left pane axes ----
const s = layer('sideAxis', -8, -114);
rect(s, 8, 114, 1, 336, '#000');
rect(s, 8, 472, 20, 2, '#d4d0c8');
rect(s, 8, 474, 20, 1, '#222');
rect(s, 8, 474, 1, 369, '#000');
[132, 158, 186, 213, 240, 268, 323, 350, 378, 405, 487, 505, 522, 540, 576, 594, 611, 629, 665, 683, 701, 719, 755, 773, 791, 809].forEach(y => rect(s, 8, y, 4, 1, '#000'));
[[295, '0,'], [433, '0,'], [558, '15'], [647, '10'], [737, '50'], [827, '0,']].forEach(t => {
    rect(s, 8, t[0], 6, 1, '#000');
    label(s, 17, t[0], t[1]);
});
rect(s, 27, 139, 1, 12, RED);
add(s, 'path', { d: 'M16 159l4-4 4 4zM16 549l4-4 4 4z', fill: RED });
rect(s, 15, 529, 13, 13, RED);
label(s, 15, 535, '15', '#fff');

// empty rows under the positions
const rows = document.getElementById('rows');
for (let i = 0; i < 11; i++) {
    const tr = rows.insertRow();
    for (let c = 0; c < 9; c++) tr.insertCell();
}
```
